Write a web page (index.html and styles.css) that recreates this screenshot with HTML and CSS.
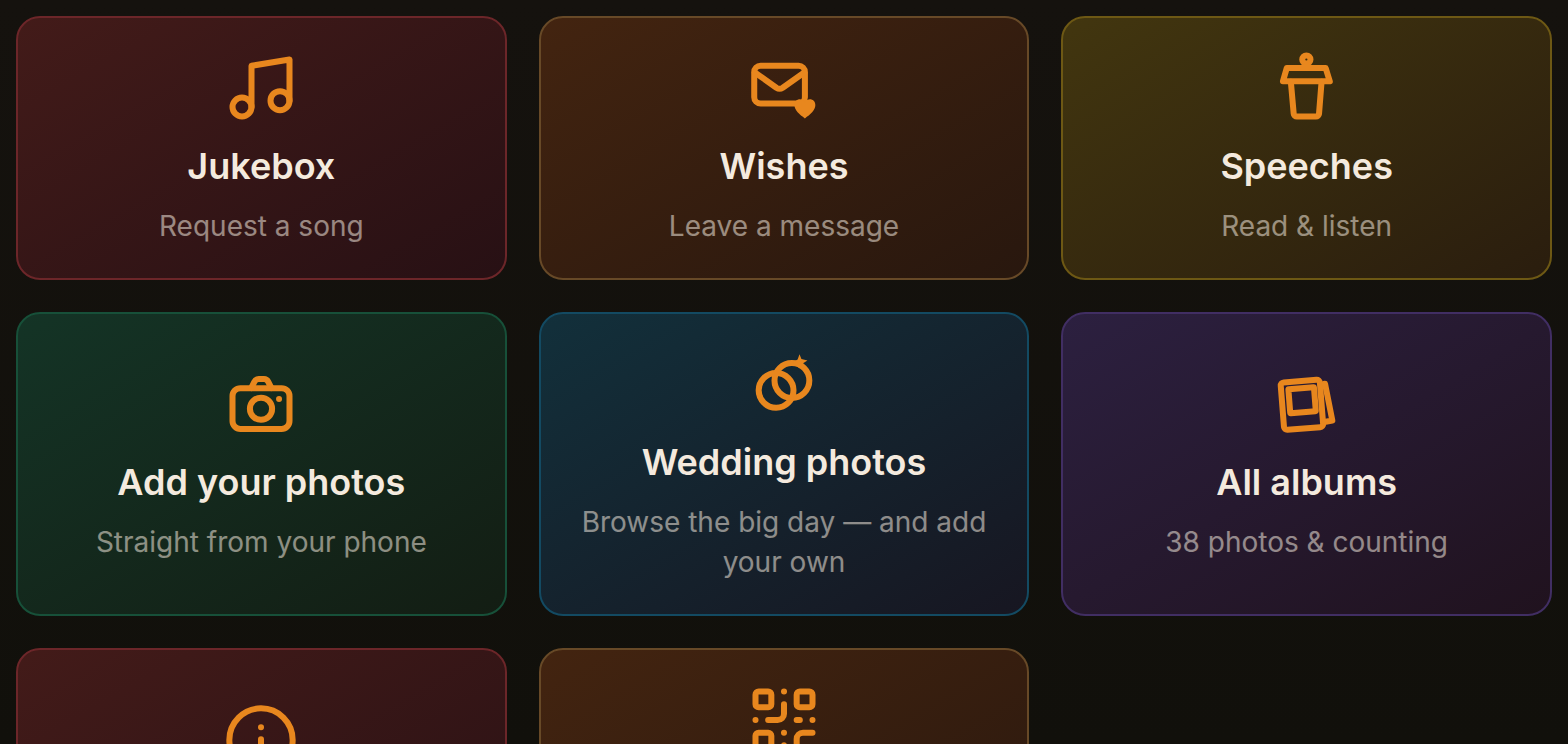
FILE: index.html
```html
<!DOCTYPE html>
<html lang="en">
<head>
<meta charset="utf-8">
<meta name="viewport" content="width=device-width, initial-scale=1">
<title>Menu</title>
<link rel="stylesheet" href="styles.css">
</head>
<body>
<main class="grid">
  <a class="card red" href="#jukebox">
    <svg class="icon" viewBox="0 0 24 24" aria-hidden="true"><path d="M9 18V5l12-2v13"/><circle cx="6" cy="18" r="3"/><circle cx="18" cy="16" r="3"/></svg>
    <h2 class="title">Jukebox</h2>
    <p class="sub">Request a song</p>
  </a>
  <a class="card orange" href="#wishes">
    <svg class="icon" viewBox="0 0 24 24" aria-hidden="true"><rect x="2.6" y="5" width="16" height="11.9" rx="2"/><path d="M2.8 7.1l6.8 4.8a1.8 1.8 0 0 0 2 0l6.8-4.8"/><path class="solid" d="M18.600 21.600c-1.700-1.200-3.300-2.500-3.300-4.200 0-2.100 2.500-2.500 3.300-.8.800-1.700 3.300-1.300 3.300.8 0 1.700-1.600 3-3.300 4.200z"/></svg>
    <h2 class="title">Wishes</h2>
    <p class="sub">Leave a message</p>
  </a>
  <a class="card yellow" href="#speeches">
    <svg class="icon" viewBox="0 0 24 24" aria-hidden="true"><circle cx="11.8" cy="3" r="1.3"/><path d="M5.6 5.7h12.300l1.300 4.200H4.400z"/><path d="M6.900 10l.9 10.100a1 1 0 0 0 1 .9h6a1 1 0 0 0 1-.9L16.600 10"/></svg>
    <h2 class="title">Speeches</h2>
    <p class="sub">Read &amp; listen</p>
  </a>
  <a class="card green" href="#upload">
    <svg class="icon" viewBox="0 0 24 24" aria-hidden="true"><rect x="3" y="7" width="18" height="12.9" rx="2.5"/><path d="M8.900 7l1-2a1.600 1.600 0 0 1 1.400-.9h1.600a1.600 1.600 0 0 1 1.400.9l1 2"/><circle cx="12" cy="13.5" r="3.5"/><circle class="solid" cx="17.7" cy="10.4" r=".95"/></svg>
    <h2 class="title">Add your photos</h2>
    <p class="sub">Straight from your phone</p>
  </a>
  <a class="card blue" href="#wedding">
    <svg class="icon" viewBox="0 0 24 24" aria-hidden="true"><circle cx="9.5" cy="14" r="5.5"/><circle cx="14.5" cy="10.9" r="5.5"/><path class="solid" d="M16.900 2.600l.6 1.500 1.900.5-1.500.9.300 1.200-1.300.3-2.300-1.700 1.700-1z"/></svg>
    <h2 class="title">Wedding photos</h2>
    <p class="sub">Browse the big day — and add your own</p>
  </a>
  <a class="card purple" href="#albums">
    <svg class="icon" viewBox="0 0 24 24" aria-hidden="true"><rect x="4.2" y="4.75" width="12.4" height="15" rx="1" transform="rotate(-4.5 10.4 12.25)"/><rect x="6.4" y="7" width="8.100" height="7.600" rx=".2" transform="rotate(-4.5 10.400 10.800)"/><path d="M17.500 5.600h.2l2.300 11.600-2.100.4"/></svg>
    <h2 class="title">All albums</h2>
    <p class="sub">38 photos &amp; counting</p>
  </a>
  <a class="card red" href="#info" aria-label="Info">
    <svg class="icon" viewBox="0 0 24 24" aria-hidden="true"><circle cx="12" cy="12" r="10"/><path d="M12 8h.01M12 11.800v4.400"/></svg>
    <span class="one-line"></span>
  </a>
  <a class="card orange" href="#qr" aria-label="QR code">
    <svg class="icon" viewBox="0 0 24 24" aria-hidden="true"><rect x="3" y="3" width="5" height="5" rx="1"/><rect x="16" y="3" width="5" height="5" rx="1"/><rect x="3" y="16" width="5" height="5" rx="1"/><path d="M21 16h-3a2 2 0 0 0-2 2v3M21 21v.01M12 7v3a2 2 0 0 1-2 2H7M3 12h.01M12 3h.01M12 16v.01M16 12h1M21 12v.01M12 21v-1"/></svg>
    <span class="two-line"></span>
  </a>
</main>
</body>
</html>
```

FILE: styles.css
```css
* {
  box-sizing: border-box;
}

body {
  height: 100vh;
  margin: 0;
  overflow: hidden;
  background: linear-gradient(#15120e, #11100b);
  color: #f4eade;
  font-family: Inter, "Liberation Sans", sans-serif;
}

.grid {
  display: grid;
  grid-template-columns: repeat(3, minmax(0, 1fr));
  gap: 32px;
  padding: 16px;
}

.card {
  display: flex;
  flex-direction: column;
  align-items: center;
  justify-content: center;
  gap: 16px;
  padding: 32px;
  border: 2px solid;
  border-radius: 24px;
  background-origin: border-box;
  color: inherit;
  text-align: center;
  text-decoration: none;
}

.icon {
  width: 76px;
  height: 76px;
  fill: none;
  stroke: #e8871e;
  stroke-width: 1.9;
  stroke-linecap: round;
  stroke-linejoin: round;
}

.solid {
  fill: #e8871e;
  stroke: none;
}

.title {
  margin: 0;
  font-size: 36px;
  font-weight: 600;
  line-height: 48px;
}

.sub {
  margin: 0;
  font-size: 28px;
  font-weight: 400;
  line-height: 40px;
  opacity: 0.54;
}

.one-line {
  min-height: 104px;
}

.two-line {
  min-height: 144px;
}

.red {
  background-image: linear-gradient(150deg, #431b19, #271014);
  border-color: #6c2629;
}

.orange {
  background-image: linear-gradient(150deg, #432410, #28170e);
  border-color: #674927;
}

.yellow {
  background-image: linear-gradient(150deg, #42360f, #2a1d0e);
  border-color: #6d5814;
}

.green {
  background-image: linear-gradient(150deg, #143426, #131d13);
  border-color: #175039;
}

.blue {
  background-image: linear-gradient(150deg, #12303b, #171621);
  border-color: #134a62;
}

.purple {
  background-image: linear-gradient(150deg, #2c2040, #20121e);
  border-color: #412e63;
}
```
